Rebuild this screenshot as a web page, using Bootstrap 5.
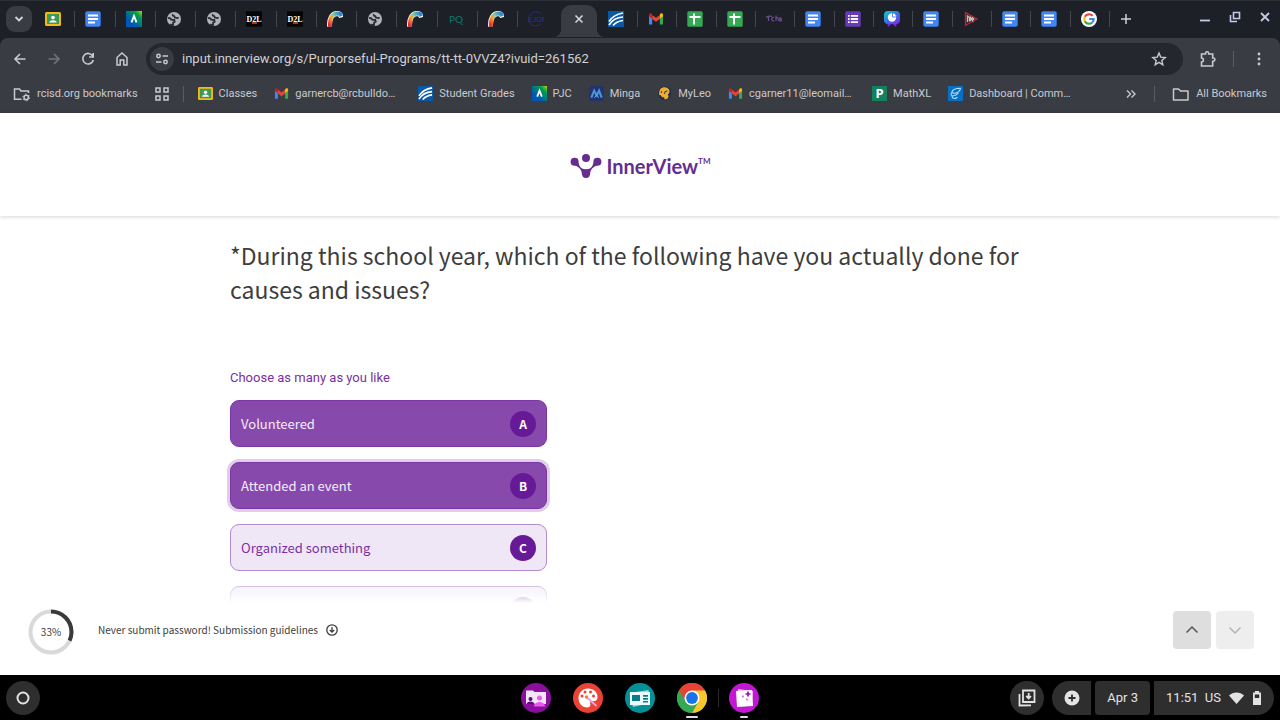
<!DOCTYPE html>
<html lang="en">
<head>
<meta charset="utf-8">
<meta name="viewport" content="width=device-width, initial-scale=1">
<title>InnerView</title>
<link href="https://cdn.jsdelivr.net/npm/bootstrap@5.3.0/dist/css/bootstrap.min.css" rel="stylesheet">
<style>
:root{--strip:#1e2027;--bar:#3a3c43;--field:#25272e;--chrome-text:#c9cace;--purple:#7b2fa5;--deep:#671a97;--survey:"Noto Sans CJK SC","Open Sans",sans-serif}
body{font-family:Roboto,"Liberation Sans",sans-serif;overflow:hidden}
button{border:0;background:none;padding:0;color:inherit}
svg{display:block;flex:none}
.strip{background:var(--strip);height:38px;border-top:1px solid #2d2f37;color:#d5d6da;padding-bottom:1px}
.search-tabs{width:26px;height:26px;border-radius:9px;background:var(--bar);margin-left:6px}
.tabs{margin-left:3px}
.tabs-left{flex:524 1 0}.tabs-right{flex:512 1 0}
.tab-item{flex:1 1 0;min-width:0;height:16px;padding-left:10px;border-right:1px solid #44464e}
.tab-item.no-rule{border-color:transparent}
.tab-active{flex:40 1 0}
.tab-active button{background:var(--bar);width:36px;height:32px;margin-top:4px;border-radius:10px 10px 0 0;position:relative}
.tab-active button::before,.tab-active button::after{content:"";position:absolute;bottom:0;width:8px;height:8px}
.tab-active button::before{right:100%;background:radial-gradient(circle at 0 0,transparent 8px,var(--bar) 8px)}
.tab-active button::after{left:100%;background:radial-gradient(circle at 100% 0,transparent 8px,var(--bar) 8px)}
.win{width:170px;color:#c3cbe6}
.under{background:var(--strip)}
.chrome{background:var(--bar);color:var(--chrome-text);border-radius:8px 8px 0 0}
.tools{height:42px;padding-left:3px;padding-right:4px}
.tool{width:34px;height:32px}
.omni{background:var(--field);border-radius:16px;height:32px;margin-left:7px}
.site{width:24px;height:24px;border-radius:12px;background:var(--bar)}
.omni input{background:none;border:0;outline:0;color:#cfd0d4;font-size:13px;line-height:20px;padding:0}
.marks{height:33px;font-size:11px;line-height:16px;padding:0 13px 6px;gap:17px}
.marks a{color:var(--chrome-text);text-decoration:none;white-space:nowrap;gap:6px}
.marks .mail-link{width:127px}
.rule-v{width:1px;height:16px;background:#5a5c64}
.rule-tight{margin:0 -3px}
.brand-bar{height:103px;box-shadow:0 1px 4px rgba(0,0,0,.16);position:relative;padding-top:3px}
.brand-name{font:700 20px/24px Lato,sans-serif;color:#662d91;margin-left:5px}
.tm{font:700 8px/12px Lato,sans-serif;color:#662d91;padding-bottom:11px}
.survey{font-family:var(--survey);flex:1 1 0;min-height:0;overflow:hidden}
.wrap-q{max-width:820px}
.question{font-size:23px;line-height:34px;color:#3d3d3d;font-weight:400;padding-top:22px;margin-bottom:62px}
.hint{font:400 13px/20px Roboto,sans-serif;color:var(--purple);margin-bottom:12px}
.choices{width:317px}
.choice{height:47px;border:1px solid #b48bce;border-radius:9px;background:#efe7f5;color:var(--purple);font-size:13px;line-height:20px;padding:0 10px;margin-bottom:15px;cursor:pointer}
.btn-check:checked+.choice{background:#8849ad;border-color:#7b35a5;color:#f4edf8}
.choice.ring{box-shadow:0 0 0 3px #dfcdea}
.key{width:26px;height:26px;border-radius:13px;background:var(--deep);color:#fff;font-size:12px;font-weight:700;line-height:26px;text-align:center}
.fade-end{position:absolute;left:0;right:0;bottom:0;height:22px;background:linear-gradient(rgba(255,255,255,.3),#fff)}
.foot{height:72px;font-family:var(--survey);font-size:10px;line-height:16px;color:#3d3d3d;padding:0 26px 0 28px}
.progress-ring{width:46px;height:46px;margin-top:-14px;position:relative}
.progress-ring span{position:absolute;inset:0;line-height:46px;text-align:center}
.foot a{color:#3d3d3d;text-decoration:none;margin-left:24px;margin-top:-18px;gap:8px}
.steps{gap:5px}
.step{width:38px;height:38px;border-radius:4px;background:#dedede;color:#555;margin-top:-18px}
.step:disabled{background:#eee;color:#b5b5b5}
.shelf{background:#000;height:45px;color:#e3e3e3;font-size:13px;line-height:20px;font-weight:500;padding:0 6px}
.shelf-side{flex:1 1 0}
.shelf-apps{gap:22px}
.disc,.pill{height:34px;background:#2e2e2e}
.disc{width:34px;border-radius:17px}
.pill{border-radius:4px}
.pill-add{width:39px}
.app{width:30px;height:45px;position:relative}
.app.open::after{content:"";position:absolute;bottom:2px;left:50%;width:12px;height:2px;margin-left:-6px;background:#ddd;border-radius:1px}
.app.short::after{width:8px;margin-left:-4px}
.app.short::before{content:"";position:absolute;left:-11px;top:14px;width:1px;height:18px;background:#2a2a2a}
</style>
</head>
<body class="d-flex flex-column vh-100 bg-white">
<svg width="0" height="0" class="position-absolute" aria-hidden="true">
<defs>
<linearGradient id="g-pjc" x1="1" y1="0" x2=".3" y2=".7"><stop offset="0" stop-color="#c4d600"/><stop offset=".35" stop-color="#00a04a"/><stop offset="1" stop-color="#0057b8"/></linearGradient>
<linearGradient id="g-arc" x1="0" y1="1" x2="1" y2="0"><stop offset="0" stop-color="#e8202a"/><stop offset=".4" stop-color="#ff9d2e"/><stop offset=".6" stop-color="#7fd0a0"/><stop offset="1" stop-color="#2079d8"/></linearGradient>
<linearGradient id="g-pie" x1="0" y1="0" x2="1" y2="1"><stop offset="0" stop-color="#00d5d0"/><stop offset=".5" stop-color="#3a6fe8"/><stop offset="1" stop-color="#8a20f0"/></linearGradient>
<symbol id="i-class" viewBox="0 0 16 16"><rect x="0" y="1" width="16" height="14" rx="1.5" fill="#f4b916"/><rect x="2" y="3" width="12" height="10" fill="#3c9a58"/><circle cx="8" cy="6.600" r="1.800" fill="#fff"/><path d="M4.200 11.400c.5-3 7-3 7.600 0z" fill="#fff"/></symbol>
<symbol id="i-doc" viewBox="0 0 16 16"><rect x=".3" y=".3" width="15.400" height="15.400" rx="2" fill="#4285f4"/><path d="M3 4.500h10M3 8h10M3 11.500h7" stroke="#fff" stroke-width="1.800"/></symbol>
<symbol id="i-pjc" viewBox="0 0 16 16"><rect width="16" height="16" fill="url(#g-pjc)"/><path d="M5.500 11.300 8 5l2.500 6.300" fill="none" stroke="#fff" stroke-width="1.900"/></symbol>
<symbol id="i-globe" viewBox="0 0 16 16"><circle cx="8" cy="8" r="7" fill="#b2b4b9"/><path d="M2 7.200c1.500-.4 2.600.2 3.300 1.500l2.900.3.500 1.600-1.500 1-.2 2.400c-1 .2-2 0-3-.8M7 3.200c-.8 1.200.2 1.800 1.200 1.900l.8 1.500 3.600.4" fill="none" stroke="#2b2d35" stroke-width="1.900"/></symbol>
<symbol id="i-d2l" viewBox="0 0 16 16"><rect y=".3" width="16" height="15.400" fill="#050505"/><path d="M6 12h5" stroke="#d4560f" stroke-width="1.500"/><text x="8" y="11" text-anchor="middle" font-family="Liberation Serif" font-weight="700" font-size="8" fill="#fff">D2L</text></symbol>
<symbol id="i-arc" viewBox="0 0 16 16"><path d="M2.600 15.500C2 8 5 2.600 10 2.400c2.700 0 4 2 4.600 4" fill="none" stroke="#fff" stroke-width="5"/><path d="M3 15.500C2.400 8 5 3 10 2.600c2.500 0 3.500 1 4.300 2.500" fill="none" stroke="url(#g-arc)" stroke-width="4"/></symbol>
<symbol id="i-pq" viewBox="0 0 16 16"><text x="8" y="12" text-anchor="middle" font-family="Lato" font-size="10" fill="#0b7672">PQ</text></symbol>
<symbol id="i-ejof" viewBox="0 0 16 16"><path d="M12.500 2.800A7 7 0 1 0 12.500 13" fill="none" stroke="#282b73"/><text x="9" y="11" text-anchor="middle" font-family="Liberation Sans" font-size="7" fill="#30338a">EJOF</text></symbol>
<symbol id="i-sky" viewBox="0 0 16 16"><rect width="16" height="16" fill="#0a59a7"/><path d="M1 10.500C4 6 9 3 15 2M1 14c3-5 8-7.500 14-8M5 14.500c2.500-3 6-4.500 10-5" fill="none" stroke="#fff" stroke-width="1.700"/></symbol>
<symbol id="i-mail" viewBox="0 0 16 16"><path d="M1 4v9.500h3.200V6z" fill="#4285f4"/><path d="M11.800 6v7.500H15V4z" fill="#34a853"/><path d="M11.800 3.700v4L15 5.300V4c0-1.800-1.600-2-2.600-1.200z" fill="#fbbc04"/><path d="M4.200 3.900 8 6.800l3.800-2.900v4L8 10.800 4.200 7.900z" fill="#ea4335"/><path d="M4.200 3.700v4L1 5.300V4c0-1.800 1.600-2 2.600-1.200z" fill="#c5221f"/></symbol>
<symbol id="i-sheet" viewBox="0 0 16 16"><rect x=".3" y=".3" width="15.400" height="15.400" rx="1.500" fill="#34a853"/><path d="M2.500 6h11M7 2.500v11" stroke="#fff" stroke-width="2"/></symbol>
<symbol id="i-tcb" viewBox="0 0 16 16"><path d="M0 6.500c2-1.500 4-1.500 6-1M2.500 6v4M8 6.500c-3-1-3 4 0 3.500M10 4.500V10M10 7c2-1 2.500 0 2.500 3M14 6v4c2.500.5 2.500-3 0-2.500" fill="none" stroke="#6a4f90" stroke-width="1.200"/></symbol>
<symbol id="i-form" viewBox="0 0 16 16"><rect x=".3" y=".3" width="15.400" height="15.400" rx="1.500" fill="#673ab7"/><path d="M3 4.800h1.600M3 8h1.600M3 11.200h1.600M5.800 4.800H13M5.800 8H13M5.800 11.200H13" stroke="#fff" stroke-width="1.800"/></symbol>
<symbol id="i-pie" viewBox="0 0 16 16"><path d="M3 12 4 16l3-2.500L8 12l1 1.500 3 2.500 1-4z" fill="#7a22e8"/><rect width="16" height="13" rx="4" fill="url(#g-pie)"/><circle cx="8" cy="6.500" r="4.200" fill="#fff"/><path d="M8.500 6V1.800a4.500 4.500 0 0 1 4.200 4.200z" fill="#fff" stroke="#346fd8" stroke-width=".8"/></symbol>
<symbol id="i-play" viewBox="0 0 16 16"><path d="M2.500 1.500 14 8 2.500 14.500z" fill="#412329" stroke="#b5283b" stroke-width="1.300"/><path d="M4.500 11V5l2 1.500v4M7.500 10V6.500l2 3V6M10.500 7v2" fill="none" stroke="#c8beb4" stroke-width="1.300"/></symbol>
<symbol id="i-google" viewBox="0 0 16 16"><circle cx="8" cy="8" r="8" fill="#fff"/><g fill="none" stroke-width="2.200"><path d="M11.600 4.900A4.750 4.750 0 0 0 3.800 5.800" stroke="#ea4335"/><path d="M3.800 5.800a4.750 4.750 0 0 0 0 4.400" stroke="#fbbc05"/><path d="M3.800 10.200a4.750 4.750 0 0 0 7.400 1.300" stroke="#34a853"/><path d="M11.200 11.500A4.500 4.500 0 0 0 12.700 8H8.200" stroke="#4285f4"/></g></symbol>
<symbol id="i-minga" viewBox="0 0 16 16"><rect width="16" height="16" rx="3" fill="#22346e"/><path d="M2.500 12.500 5.500 5l2.700 5L10.700 5l2.800 7.500" fill="none" stroke="#4796dc" stroke-width="2.200"/><path d="m5.700 12.500 2.500-3 2 3" stroke="#59c2f0" fill="none"/></symbol>
<symbol id="i-leo" viewBox="0 0 16 16"><path d="M3 2.500C5 .5 9 0 11.500 1.200c3.500 1.300 4 4.500 3.300 6.800l-.8 4-2.500 2.500-3.500 1-2.500-.8-3-2.700L1 8z" fill="#1b2d55"/><path d="M3.500 3.200C5.500 1.200 9 1 11 2.200c2.300 1 3 3.300 2 5.300L11.500 9l1 2-1.300 2.700-3 .8-.7-2.500L5.500 12 4 9.800 2.200 9.500 2.400 6z" fill="#eead32"/><path d="M11 5.300 8.500 6 8 8.500M5 5.500l-.5 2" fill="none" stroke="#1b2d55"/></symbol>
<symbol id="i-p" viewBox="0 0 16 16"><rect width="16" height="16" fill="#14805f"/><text x="8" y="13" text-anchor="middle" font-family="Noto Sans" font-size="14" font-weight="700" fill="#fff">P</text></symbol>
<symbol id="i-dash" viewBox="0 0 16 16"><rect width="16" height="16" fill="#0870c4"/><path d="M13.500 2.500C9 2.500 4.500 4 4 7l2 .8c4 0 6.500-2 7.500-5.300M4 7c-1.500 2-.5 4 1.500 3.500M5.500 10.500c3-.5 4-1.500 5.500-3M4.500 10.500c-.5 3 3 3.500 5.500 1.500" fill="none" stroke="#b9dcf7" stroke-width="1.100"/></symbol>
<symbol id="i-folder" viewBox="0 0 18 16"><path d="M1.500 3h5l2 2h7.500v9h-14.500z" fill="none" stroke="currentColor" stroke-width="1.500" stroke-linejoin="round"/></symbol>
</defs>
</svg>

<header class="flex-shrink-0">
<div class="strip d-flex align-items-center">
  <button class="search-tabs d-flex align-items-center justify-content-center" aria-label="Search tabs"><svg width="12" height="12" viewBox="0 0 12 12"><path d="m2.500 4 3.500 3.500L9.500 4" fill="none" stroke="currentColor" stroke-width="1.800"/></svg></button>
  <div class="tabs d-flex align-items-center flex-fill">
    <div class="tabs-left d-flex">
      <button class="tab-item"><svg width="16" height="16"><use href="#i-class"/></svg></button>
      <button class="tab-item"><svg width="16" height="16"><use href="#i-doc"/></svg></button>
      <button class="tab-item"><svg width="16" height="16"><use href="#i-pjc"/></svg></button>
      <button class="tab-item"><svg width="16" height="16"><use href="#i-globe"/></svg></button>
      <button class="tab-item"><svg width="16" height="16"><use href="#i-globe"/></svg></button>
      <button class="tab-item"><svg width="16" height="16"><use href="#i-d2l"/></svg></button>
      <button class="tab-item"><svg width="16" height="16"><use href="#i-d2l"/></svg></button>
      <button class="tab-item"><svg width="16" height="16"><use href="#i-arc"/></svg></button>
      <button class="tab-item"><svg width="16" height="16"><use href="#i-globe"/></svg></button>
      <button class="tab-item"><svg width="16" height="16"><use href="#i-arc"/></svg></button>
      <button class="tab-item"><svg width="16" height="16"><use href="#i-pq"/></svg></button>
      <button class="tab-item"><svg width="16" height="16"><use href="#i-arc"/></svg></button>
      <button class="tab-item no-rule"><svg width="16" height="16"><use href="#i-ejof"/></svg></button>
    </div>
    <div class="tab-active d-flex justify-content-center"><button class="d-flex align-items-center justify-content-center pb-1 flex-shrink-0" aria-label="Close tab"><svg width="12" height="12" viewBox="0 0 12 12"><path d="m2.500 2.500 7 7m0-7-7 7" stroke="currentColor" stroke-width="1.600"/></svg></button></div>
    <div class="tabs-right d-flex">
      <button class="tab-item"><svg width="16" height="16"><use href="#i-sky"/></svg></button>
      <button class="tab-item"><svg width="16" height="16"><use href="#i-mail"/></svg></button>
      <button class="tab-item"><svg width="16" height="16"><use href="#i-sheet"/></svg></button>
      <button class="tab-item"><svg width="16" height="16"><use href="#i-sheet"/></svg></button>
      <button class="tab-item"><svg width="16" height="16"><use href="#i-tcb"/></svg></button>
      <button class="tab-item"><svg width="16" height="16"><use href="#i-doc"/></svg></button>
      <button class="tab-item"><svg width="16" height="16"><use href="#i-form"/></svg></button>
      <button class="tab-item"><svg width="16" height="16"><use href="#i-pie"/></svg></button>
      <button class="tab-item"><svg width="16" height="16"><use href="#i-doc"/></svg></button>
      <button class="tab-item"><svg width="16" height="16"><use href="#i-play"/></svg></button>
      <button class="tab-item"><svg width="16" height="16"><use href="#i-doc"/></svg></button>
      <button class="tab-item"><svg width="16" height="16"><use href="#i-doc"/></svg></button>
      <button class="tab-item"><svg width="16" height="16"><use href="#i-google"/></svg></button>
    </div>
  </div>
  <div class="win d-flex align-items-center justify-content-between px-2">
    <button aria-label="New tab"><svg width="16" height="16" viewBox="0 0 16 16"><path d="M8 3v10M3 8h10" stroke="#d0d1d5" stroke-width="1.500"/></svg></button>
    <div class="d-flex gap-3 pb-1">
      <button aria-label="Minimize"><svg width="14" height="14" viewBox="0 0 14 14"><path d="M2 10.500h10" stroke="currentColor" stroke-width="1.800"/></svg></button>
      <button aria-label="Restore"><svg width="14" height="14" viewBox="0 0 14 14"><path d="M5.500 2.500h6v6h-6zM2.500 5v6.500H9" fill="none" stroke="currentColor" stroke-width="1.600"/></svg></button>
      <button aria-label="Close"><svg width="14" height="14" viewBox="0 0 14 14"><path d="m3 3 8 8m0-8-8 8" stroke="currentColor" stroke-width="1.800"/></svg></button>
    </div>
  </div>
</div>
<div class="under"><div class="chrome">
  <div class="tools d-flex align-items-center">
    <button class="tool d-flex align-items-center justify-content-center" aria-label="Back"><svg width="16" height="16" viewBox="0 0 16 16"><path d="M13.500 8H3m5-5L3 8l5 5" fill="none" stroke="currentColor" stroke-width="1.600"/></svg></button>
    <button class="tool d-flex align-items-center justify-content-center" aria-label="Forward"><svg width="16" height="16" viewBox="0 0 16 16"><path d="M2.500 8H13M8 3l5 5-5 5" fill="none" stroke="#72747b" stroke-width="1.600"/></svg></button>
    <button class="tool d-flex align-items-center justify-content-center" aria-label="Reload"><svg width="16" height="16" viewBox="0 0 16 16"><path d="M12.700 5A5.300 5.300 0 1 0 13.300 9M13.200 2v4h-4" fill="none" stroke="currentColor" stroke-width="1.600"/></svg></button>
    <button class="tool d-flex align-items-center justify-content-center" aria-label="Home"><svg width="16" height="16" viewBox="0 0 16 16"><path d="M3 6.500 8 2l5 4.500V14H9.800V9H6.200v5H3z" fill="none" stroke="currentColor" stroke-width="1.500"/></svg></button>
    <div class="omni flex-fill d-flex align-items-center ps-1 pe-3">
      <button class="site d-flex align-items-center justify-content-center me-2" aria-label="Site information"><svg width="14" height="14" viewBox="0 0 14 14"><g fill="none" stroke="currentColor" stroke-width="1.500"><circle cx="3.500" cy="4" r="1.700"/><path d="M7.500 4H13M1 10h5.500"/><circle cx="10.500" cy="10" r="1.700"/></g></svg></button>
      <input class="flex-fill" type="text" aria-label="Address" value="input.innerview.org/s/Purporseful-Programs/tt-tt-0VVZ4?ivuid=261562">
      <button aria-label="Bookmark this page"><svg width="16" height="16" viewBox="0 0 16 16"><path d="m8 2 1.700 4.100 4.500.4-3.400 2.900 1 4.400L8 11.400l-3.800 2.400 1-4.400L1.800 6.500l4.500-.4z" fill="none" stroke="currentColor" stroke-width="1.400"/></svg></button>
    </div>
    <button class="ms-3" aria-label="Extensions"><svg width="18" height="18" viewBox="0 0 18 18"><path d="M2.500 4h4V3.400a1.600 1.600 0 0 1 3.200 0V4h4v4h.6a1.600 1.600 0 0 1 0 3.200h-.6V16H2.500v-4c2.500 0 2.500-4 0-4z" fill="none" stroke="currentColor" stroke-width="1.600"/></svg></button>
    <span class="rule-v mx-3"></span>
    <button class="me-2" aria-label="Menu"><svg width="18" height="16" viewBox="0 0 18 16"><g fill="currentColor"><circle cx="9" cy="3" r="1.400"/><circle cx="9" cy="8" r="1.400"/><circle cx="9" cy="13" r="1.400"/></g></svg></button>
  </div>
  <nav class="marks d-flex align-items-center" aria-label="Bookmarks">
    <a class="d-flex align-items-center" href="#"><svg width="18" height="16" viewBox="0 0 18 16"><path d="M8.500 13.300h-7V3h5l1.500 2h7.500v2" fill="none" stroke="currentColor" stroke-width="1.500"/><circle cx="13.200" cy="11.500" r="2.200" fill="none" stroke="currentColor" stroke-width="1.500"/><circle cx="13.200" cy="11.500" r="3.400" fill="none" stroke="currentColor" stroke-dasharray="1.400 2.200"/></svg>rcisd.org bookmarks</a>
    <a class="d-flex" href="#" aria-label="Apps"><svg width="14" height="14" viewBox="0 0 14 14"><path d="M1 1h4v4H1zM9 1h4v4H9zM1 9h4v4H1zM9 9h4v4H9z" fill="none" stroke="currentColor" stroke-width="1.500"/></svg></a>
    <span class="rule-v rule-tight"></span>
    <a class="d-flex align-items-center" href="#"><svg width="15" height="15"><use href="#i-class"/></svg>Classes</a>
    <a class="mail-link d-flex align-items-center" href="#"><svg width="15" height="15"><use href="#i-mail"/></svg>garnercb@rcbulldo…</a>
    <a class="d-flex align-items-center" href="#"><svg width="15" height="15"><use href="#i-sky"/></svg>Student Grades</a>
    <a class="d-flex align-items-center" href="#"><svg width="15" height="15"><use href="#i-pjc"/></svg>PJC</a>
    <a class="d-flex align-items-center" href="#"><svg width="15" height="15"><use href="#i-minga"/></svg>Minga</a>
    <a class="d-flex align-items-center" href="#"><svg width="15" height="15"><use href="#i-leo"/></svg>MyLeo</a>
    <a class="mail-link d-flex align-items-center" href="#"><svg width="15" height="15"><use href="#i-mail"/></svg>cgarner11@leomail…</a>
    <a class="d-flex align-items-center" href="#"><svg width="15" height="15"><use href="#i-p"/></svg>MathXL</a>
    <a class="d-flex align-items-center" href="#"><svg width="15" height="15"><use href="#i-dash"/></svg>Dashboard | Comm…</a>
    <button class="ms-auto" aria-label="More bookmarks"><svg width="12" height="12" viewBox="0 0 12 12"><path d="m2 2.500 3.500 3.500L2 9.500m4.500-7L10 6 6.500 9.500" fill="none" stroke="currentColor" stroke-width="1.400"/></svg></button>
    <span class="rule-v"></span>
    <a class="d-flex align-items-center" href="#"><svg width="18" height="16"><use href="#i-folder"/></svg>All Bookmarks</a>
  </nav>
</div></div>
</header>

<div class="brand-bar d-flex align-items-center justify-content-center flex-shrink-0">
  <svg width="32" height="26" viewBox="0 0 32 26"><g fill="#662d91"><circle cx="16" cy="5" r="4"/><circle cx="4.600" cy="8.800" r="4"/><circle cx="27.400" cy="8.800" r="4"/><path d="M5 12.700 8.400 9.500c1 2 .8 6.700 7.600 6.700s6.600-4.700 7.600-6.700l3.400 3.200c-3 .4-6.200 3.300-6.700 6.800 0 3.500-1.300 5.500-4.300 5.500s-4.300-2-4.300-5.500c-.5-3.500-3.700-6.400-6.700-6.800z"/></g></svg>
  <span class="brand-name">InnerView</span><span class="tm">TM</span>
</div>

<main class="survey position-relative">
  <div class="wrap-q mx-auto">
    <h1 class="question">*During this school year, which of the following have you actually done for causes and issues?</h1>
    <p class="hint">Choose as many as you like</p>
    <div class="choices">
      <input class="btn-check" type="checkbox" id="a" checked><label class="choice d-flex align-items-center justify-content-between" for="a">Volunteered<span class="key">A</span></label>
      <input class="btn-check" type="checkbox" id="b" checked><label class="choice ring d-flex align-items-center justify-content-between" for="b">Attended an event<span class="key">B</span></label>
      <input class="btn-check" type="checkbox" id="c"><label class="choice d-flex align-items-center justify-content-between" for="c">Organized something<span class="key">C</span></label>
      <input class="btn-check" type="checkbox" id="d"><label class="choice d-flex align-items-center justify-content-end" for="d"><span class="key"></span></label>
    </div>
  </div>
  <div class="fade-end"></div>
</main>

<footer class="foot d-flex align-items-center flex-shrink-0">
  <div class="progress-ring"><svg width="46" height="46" viewBox="0 0 46 46"><circle cx="23" cy="23" r="20.500" fill="none" stroke="#d9d9d9" stroke-width="4"/><circle cx="23" cy="23" r="20.500" fill="none" stroke="#3a3a3a" stroke-width="4" pathLength="100" stroke-dasharray="32 68" transform="rotate(-90 23 23)"/></svg><span>33%</span></div>
  <a class="d-flex align-items-center" href="#">Never submit password! Submission guidelines<svg width="12" height="12" viewBox="0 0 12 12"><circle cx="6" cy="6" r="5.200" fill="none" stroke="currentColor" stroke-width="1.300"/><path d="M6 3v5M3.800 6 6 8.200 8.200 6" fill="none" stroke="currentColor" stroke-width="1.300"/></svg></a>
  <div class="steps ms-auto d-flex">
    <button class="step d-flex align-items-center justify-content-center" aria-label="Previous"><svg width="14" height="14" viewBox="0 0 14 14"><path d="m1.500 9.500 5.500-5.500 5.500 5.500" fill="none" stroke="currentColor" stroke-width="1.500"/></svg></button>
    <button class="step d-flex align-items-center justify-content-center" aria-label="Next" disabled><svg width="14" height="14" viewBox="0 0 14 14"><path d="m1.500 4.500 5.500 5.500 5.500-5.500" fill="none" stroke="currentColor" stroke-width="1.500"/></svg></button>
  </div>
</footer>

<div class="shelf d-flex align-items-center flex-shrink-0">
  <div class="shelf-side"><button class="disc d-flex align-items-center justify-content-center" aria-label="Launcher"><svg width="14" height="14" viewBox="0 0 14 14"><circle cx="7" cy="7" r="5.500" fill="none" stroke="currentColor" stroke-width="2"/></svg></button></div>
  <div class="shelf-apps d-flex align-items-center">
    <button class="app d-flex align-items-center" aria-label="Screencast"><svg width="30" height="30" viewBox="0 0 30 30"><circle cx="15" cy="15" r="15" fill="#8a0f9e"/><path d="M5 7.500h7l1.500 1.500H25v12H5z" fill="#f3e5f8"/><circle cx="9.500" cy="16" r="2" fill="#5b0d78"/><path d="M5.500 21c.5-3.500 7.500-3.500 8 0z" fill="#5b0d78"/><circle cx="18.500" cy="15" r="2.500" fill="#e85af0"/><path d="M13 23.500c0-6 11-6 11 0z" fill="#e85af0"/></svg></button>
    <button class="app d-flex align-items-center" aria-label="Canvas"><svg width="30" height="30" viewBox="0 0 30 30"><circle cx="15" cy="15" r="15" fill="#ea4335"/><path d="M15 5.500c6 0 9.500 4 9.500 8.500 0 4-3 4.500-5.500 4-2.500 0-2 2-1.500 3.500 0 2-1.500 3-3.500 3-5 0-8.500-4.500-8.500-9.500s4-9.500 9.500-9.500z" fill="#fff"/><g fill="#ea4335"><circle cx="9" cy="13" r="1.500"/><circle cx="12" cy="9" r="1.500"/><circle cx="17.500" cy="9" r="1.500"/><circle cx="20.500" cy="13" r="1.500"/></g><path d="m13.500 14 10 9" stroke="#e8a2ed" stroke-width="2"/><circle cx="13.500" cy="14" r="1.700" fill="#ff7a28"/></svg></button>
    <button class="app d-flex align-items-center" aria-label="Reading"><svg width="30" height="30" viewBox="0 0 30 30"><circle cx="15" cy="15" r="15" fill="#058f96"/><path d="m4.500 10 19-3 1.500 13-17 4z" fill="#82e1ec"/><path d="M5 9h20v13H5z" fill="#edfbfd"/><path d="M7 12h8v6H7zm11 0h5v1.700h-5zm0 3h5v1.700h-5zm0 3h5v1.500h-5z" fill="#087d89"/></svg></button>
    <button class="app open d-flex align-items-center" aria-label="Chrome"><svg width="30" height="30" viewBox="0 0 30 30"><circle cx="15" cy="15" r="15" fill="#34a853"/><path d="M15 15 2 7.500A15 15 0 0 1 28 7.500z" fill="#ea4335"/><path d="M15 7.500h13A15 15 0 0 1 15 30l6.500-11.200z" fill="#fbc52d"/><path d="m2 7.500 6.500 11.300L15 15V7.500z" fill="#ea4335"/><path d="M2 7.500 8.500 18.800 12 20l3 10A15 15 0 0 1 2 7.500z" fill="#34a853"/><circle cx="15" cy="15" r="7.500" fill="#fff"/><circle cx="15" cy="15" r="5.900" fill="#1a73e8"/></svg></button>
    <button class="app open short d-flex align-items-center" aria-label="Gallery"><svg width="30" height="30" viewBox="0 0 30 30"><circle cx="15" cy="15" r="15" fill="#c218d5"/><path d="m9 6 15 2-1 15-15-2z" fill="#f6b4df"/><path d="m7 8 16-1 1 16-16 1z" fill="#fff"/><path d="M19 8.500v5M16.500 11h5" stroke="#9a13b5" stroke-width="1.700"/><path d="m14 12 1 1.500-1 1.500-1.300-1.500zm4 3 1 1.500-1 1.500-1.200-1.500z" fill="#e163ec"/></svg></button>
  </div>
  <div class="shelf-side d-flex justify-content-end gap-1">
    <button class="disc d-flex align-items-center justify-content-center me-1" aria-label="Holding space"><svg width="18" height="18" viewBox="0 0 18 18"><path d="M5 1.500h11.500V13H5zM1.500 5v11.500L13 16.300" fill="none" stroke="currentColor" stroke-width="1.800"/><path d="M10.700 4v5M8.300 7l2.400 2.400L13 7" fill="none" stroke="currentColor" stroke-width="1.800"/></svg></button>
    <button class="pill pill-add d-flex align-items-center justify-content-center rounded-start-pill" aria-label="Add"><svg width="16" height="16" viewBox="0 0 16 16"><circle cx="8" cy="8" r="7.500" fill="currentColor"/><path d="M8 4.500v7M4.500 8h7" stroke="#2e2e2e" stroke-width="1.800"/></svg></button>
    <button class="pill px-2"><span class="px-1">Apr 3</span></button>
    <button class="pill rounded-end-pill d-flex align-items-center gap-2 px-2"><span class="ps-1">11:51&nbsp; US</span><svg width="15" height="14" viewBox="0 0 15 14"><path d="M0 4.500c4-4 11-4 15 0L7.500 13z" fill="currentColor"/></svg><svg class="me-1" width="10" height="14" viewBox="0 0 10 14"><path d="M3 0h4v1.500h2V14H1V1.500h2z" fill="currentColor"/><path d="M2.800 3.500h4.400V7H2.800z" fill="#2e2e2e"/></svg></button>
  </div>
</div>
<script src="https://cdn.jsdelivr.net/npm/bootstrap@5.3.0/dist/js/bootstrap.bundle.min.js"></script>
</body>
</html>
